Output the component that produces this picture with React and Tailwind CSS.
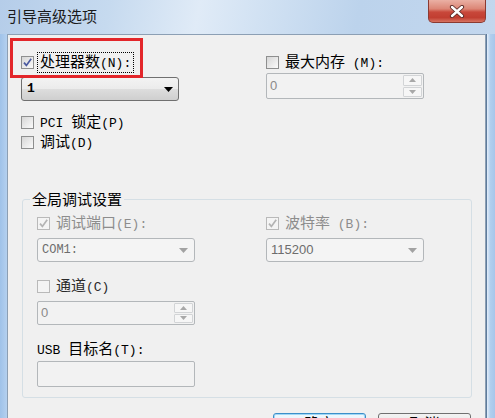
import React from "react";

const M = ({ children }) => (
  <span className="font-['Liberation_Mono',monospace] text-[13px]">{children}</span>
);

function Check({ checked, disabled }) {
  return (
    <span
      className={
        disabled
          ? "w-[13px] h-[13px] shrink-0 border border-[#b9b9b9] bg-[#f4f4f4] flex items-center justify-center"
          : "w-[13px] h-[13px] shrink-0 border border-[#8e8f8f] bg-[linear-gradient(135deg,#d6d6d6,#fbfbfb)] flex items-center justify-center"
      }
    >
      {checked && (
        <svg width="11" height="11" viewBox="0 0 11 11">
          <path
            d="M2 5.6 L4.4 8.4 L9.2 1.8"
            fill="none"
            stroke={disabled ? "#b3b3b3" : "#4b5aa0"}
            strokeWidth="1.7"
          />
        </svg>
      )}
    </span>
  );
}

function Row({ checked, disabled, children, color, focus }) {
  return (
    <div className="h-[20px] flex items-center">
      <Check checked={checked} disabled={disabled} />
      {focus ? (
        <span className={`ml-[3px] px-[2px] border border-dotted border-black whitespace-pre ${color}`}>{children}</span>
      ) : (
        <span className={`ml-[6px] whitespace-pre ${color}`}>{children}</span>
      )}
    </div>
  );
}

function ComboEnabled({ value }) {
  return (
    <div className="h-[24px] w-[158px] rounded-[3px] border border-[#707070] bg-[linear-gradient(#f3f3f3_0%,#ebebeb_50%,#dddddd_51%,#cfcfcf_100%)] flex items-center pl-[5px] pr-[5px]">
      <span className="flex-1 font-['Liberation_Mono',monospace] font-bold text-[13px] text-black">{value}</span>
      <svg width="9" height="5" viewBox="0 0 9 5">
        <path d="M0 0 H9 L4.5 5 Z" fill="#000" />
      </svg>
    </div>
  );
}

function ComboDisabled({ value, mono }) {
  return (
    <div className="h-[24px] w-[158px] rounded-[3px] border border-[#b3b7ba] bg-[#f4f4f4] flex items-center pl-[4px] pr-[6px]">
      <span
        className={
          mono
            ? "flex-1 font-['Liberation_Mono',monospace] text-[12px] text-[#6d6d6d]"
            : "flex-1 font-['Liberation_Sans',sans-serif] text-[13px] text-[#6d6d6d]"
        }
      >
        {value}
      </span>
      <svg width="9" height="5" viewBox="0 0 9 5">
        <path d="M0 0 H9 L4.5 5 Z" fill="#a2a2a2" />
      </svg>
    </div>
  );
}

function Spin({ value, h }) {
  return (
    <div className={`${h} w-[158px] rounded-[2px] border border-[#b3b7ba] bg-[#f2f2f2] flex items-stretch`}>
      <span className="flex-1 pl-[3px] flex items-center font-['Liberation_Sans',sans-serif] text-[13px] text-[#8a8a8a]">
        {value}
      </span>
      <div className="w-[21px] flex flex-col p-[1px] gap-[1px]">
        <div className="flex-1 border border-[#d2d4d6] rounded-[1px] bg-[#f6f6f6] flex items-center justify-center">
          <svg width="7" height="4" viewBox="0 0 7 4">
            <path d="M0 4 H7 L3.5 0 Z" fill="#a8a8a8" />
          </svg>
        </div>
        <div className="flex-1 border border-[#d2d4d6] rounded-[1px] bg-[#f6f6f6] flex items-center justify-center">
          <svg width="7" height="4" viewBox="0 0 7 4">
            <path d="M0 0 H7 L3.5 4 Z" fill="#a8a8a8" />
          </svg>
        </div>
      </div>
    </div>
  );
}

export default function App() {
  return (
    <div className="relative w-[495px] h-[418px] overflow-hidden flex flex-col bg-[#b3cfee]">
      {/* Title bar */}
      <div className="h-[34px] shrink-0 flex items-start justify-between bg-[linear-gradient(100deg,#b5cde9_0%,#c6daef_22%,#e0ebf7_40%,#d2e2f3_52%,#bcd3ec_72%,#c3d7ee_100%)]">
        <div className="pl-[7px] pt-[8px] font-['Noto_Sans_CJK_SC',sans-serif] text-[15px] leading-[16px] text-[#1a1a1a]">
          引导高级选项
        </div>
        <div className="mr-[9px] w-[58px] h-[23px] rounded-b-[5px] border border-t-0 border-[#8b3a31] bg-[linear-gradient(#eab0a4_0%,#dc8676_40%,#c8473a_55%,#c13e31_80%,#d77462_100%)] flex items-center justify-center">
          <svg width="16" height="13" viewBox="0 0 16 13">
            <path d="M3 2 L13 11 M13 2 L3 11" stroke="#5a2a26" strokeWidth="4.2" strokeLinecap="round" />
            <path d="M3 2 L13 11 M13 2 L3 11" stroke="#ffffff" strokeWidth="2.4" strokeLinecap="round" />
          </svg>
        </div>
      </div>

      <div className="flex-1 flex">
        <div className="w-[7px] bg-[linear-gradient(90deg,#9fc2e9,#b4d0ef)]" />
        {/* Client area */}
        <div className="flex-1 border border-b-0 border-[#8c9fb4] bg-[#f0f0f0] pt-[17px] pl-[13px] pr-[13px] font-['Noto_Sans_CJK_SC',sans-serif] text-[15px] leading-[16px] text-black">
          <div className="flex">
            <div className="w-[158px] flex flex-col">
              <Row checked focus color="text-black">
                处理器数<M>(N):</M>
              </Row>
              <div className="mt-[5px]">
                <ComboEnabled value="1" />
              </div>
              <div className="mt-[11px]">
                <Row color="text-black">
                  <M>{"PCI "}</M>锁定<M>(P)</M>
                </Row>
              </div>
              <Row color="text-black">
                调试<M>(D)</M>
              </Row>
            </div>
            <div className="ml-[87px] w-[158px] flex flex-col">
              <Row color="text-black">
                最大内存<M>{" (M):"}</M>
              </Row>
              <div className="mt-[1px]">
                <Spin value="0" h="h-[26px]" />
              </div>
            </div>
          </div>

          <fieldset className="mt-[39px] ml-[1px] w-[450px] border border-[#d5dfe5] rounded-[3px] pb-[10px]">
            <legend className="ml-[7px] px-[2px] text-black">全局调试设置</legend>
            <div className="pl-[14px] mt-[6px] flex">
              <div className="w-[158px] flex flex-col">
                <Row checked disabled color="text-[#8d8d8d]">
                  调试端口<M>(E):</M>
                </Row>
                <div className="mt-[5px]">
                  <ComboDisabled value="COM1:" mono />
                </div>
                <div className="mt-[14px]">
                  <Row disabled color="text-[#2a2a2a]">
                    通道<M>(C)</M>
                  </Row>
                </div>
                <div className="mt-[5px]">
                  <Spin value="0" h="h-[24px]" />
                </div>
                <div className="mt-[14px] h-[20px] flex items-center">
                  <span className="whitespace-pre">
                    <M>{"USB "}</M>目标名<M>(T):</M>
                  </span>
                </div>
                <div className="mt-[2px] h-[26px] w-[158px] rounded-[2px] border border-[#b3b7ba] bg-[#f2f2f2]" />
              </div>
              <div className="ml-[71px] w-[158px] flex flex-col">
                <Row checked disabled color="text-[#8d8d8d]">
                  波特率<M>{" (B):"}</M>
                </Row>
                <div className="mt-[5px]">
                  <ComboDisabled value="115200" />
                </div>
              </div>
            </div>
          </fieldset>

          <div className="mt-[15px] mr-[1px] flex justify-end gap-[12px]">
            <button className="w-[93px] h-[23px] pt-[1px] flex items-start justify-center rounded-[3px] border border-[#3c8fc9] bg-[linear-gradient(#eef7fd,#d9eefb)] shadow-[inset_0_0_0_1px_#9fd8f7] text-[15px] leading-[16px] text-black">
              确定
            </button>
            <button className="w-[93px] h-[23px] pt-[1px] flex items-start justify-center rounded-[3px] border border-[#707070] bg-[linear-gradient(#f2f2f2,#dddddd)] text-[15px] leading-[16px] text-black">
              取消
            </button>
          </div>
        </div>
        <div className="w-[9px] border-l border-[#5f7c9c] bg-[linear-gradient(90deg,#e4eefa,#b2cfee_40%,#a7c6ea)]" />
      </div>

      {/* Red annotation rectangle */}
      <div className="absolute left-[10px] top-[38px] w-[133px] h-[40px] border-[3px] border-[#e3262a] pointer-events-none" />
    </div>
  );
}
